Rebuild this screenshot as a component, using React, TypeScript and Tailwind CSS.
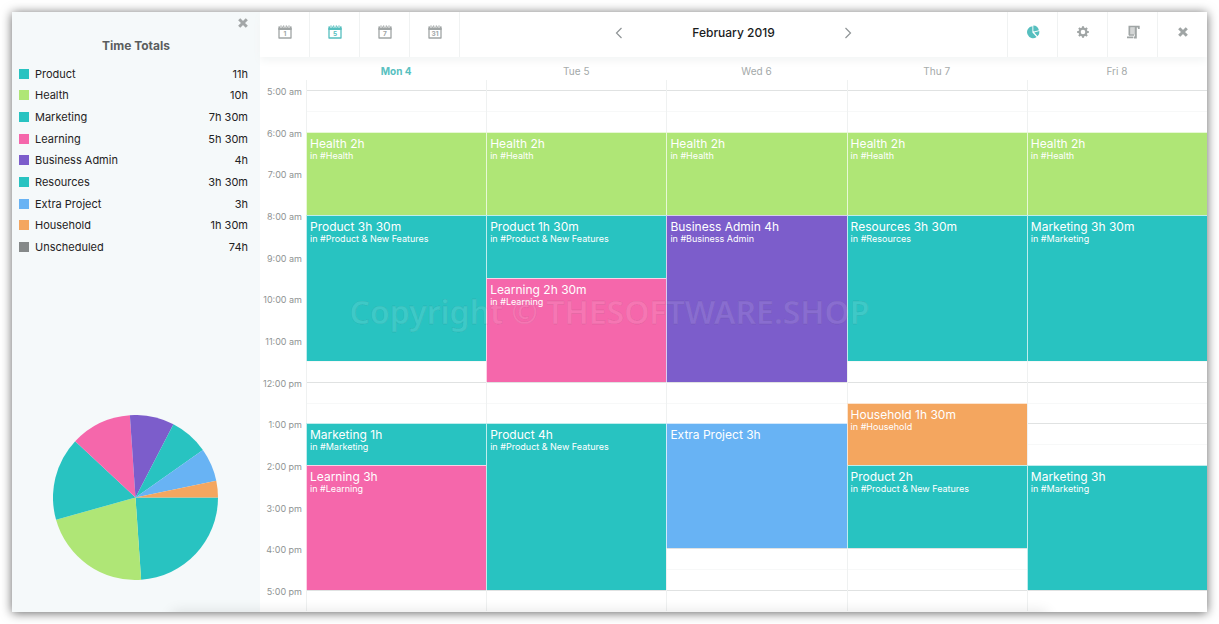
import type { CSSProperties, ReactNode } from "react";

const TEAL = "#28c3c1";
const GREEN = "#afe676";
const PINK = "#f567ab";
const PURPLE = "#7c5dcb";
const BLUE = "#68b3f4";
const ORANGE = "#f4a65f";

const totals = [
  { name: "Product", time: "11h", hours: 11, color: TEAL },
  { name: "Health", time: "10h", hours: 10, color: GREEN },
  { name: "Marketing", time: "7h 30m", hours: 7.5, color: TEAL },
  { name: "Learning", time: "5h 30m", hours: 5.5, color: PINK },
  { name: "Business Admin", time: "4h", hours: 4, color: PURPLE },
  { name: "Resources", time: "3h 30m", hours: 3.5, color: TEAL },
  { name: "Extra Project", time: "3h", hours: 3, color: BLUE },
  { name: "Household", time: "1h 30m", hours: 1.5, color: ORANGE },
  // unscheduled time is listed but not charted
  { name: "Unscheduled", time: "74h", hours: 0, color: "#858989" },
];

const days = ["Mon 4", "Tue 5", "Wed 6", "Thu 7", "Fri 8"];

const hours = [
  "5:00 am", "6:00 am", "7:00 am", "8:00 am", "9:00 am", "10:00 am", "11:00 am",
  "12:00 pm", "1:00 pm", "2:00 pm", "3:00 pm", "4:00 pm", "5:00 pm",
];

type Block = { day: number; start: number; length: number; title: string; tag?: string; color: string };

const blocks: Block[] = [
  { day: 0, start: 6, length: 2, title: "Health 2h", tag: "#Health", color: GREEN },
  { day: 0, start: 8, length: 3.5, title: "Product 3h 30m", tag: "#Product & New Features", color: TEAL },
  { day: 0, start: 13, length: 1, title: "Marketing 1h", tag: "#Marketing", color: TEAL },
  { day: 0, start: 14, length: 3, title: "Learning 3h", tag: "#Learning", color: PINK },
  { day: 1, start: 6, length: 2, title: "Health 2h", tag: "#Health", color: GREEN },
  { day: 1, start: 8, length: 1.5, title: "Product 1h 30m", tag: "#Product & New Features", color: TEAL },
  { day: 1, start: 9.5, length: 2.5, title: "Learning 2h 30m", tag: "#Learning", color: PINK },
  { day: 1, start: 13, length: 4, title: "Product 4h", tag: "#Product & New Features", color: TEAL },
  { day: 2, start: 6, length: 2, title: "Health 2h", tag: "#Health", color: GREEN },
  { day: 2, start: 8, length: 4, title: "Business Admin 4h", tag: "#Business Admin", color: PURPLE },
  { day: 2, start: 13, length: 3, title: "Extra Project 3h", color: BLUE },
  { day: 3, start: 6, length: 2, title: "Health 2h", tag: "#Health", color: GREEN },
  { day: 3, start: 8, length: 3.5, title: "Resources 3h 30m", tag: "#Resources", color: TEAL },
  { day: 3, start: 12.5, length: 1.5, title: "Household 1h 30m", tag: "#Household", color: ORANGE },
  { day: 3, start: 14, length: 2, title: "Product 2h", tag: "#Product & New Features", color: TEAL },
  { day: 4, start: 6, length: 2, title: "Health 2h", tag: "#Health", color: GREEN },
  { day: 4, start: 8, length: 3.5, title: "Marketing 3h 30m", tag: "#Marketing", color: TEAL },
  { day: 4, start: 14, length: 3, title: "Marketing 3h", tag: "#Marketing", color: TEAL },
];

// row 1 is the strip above 5:00 am, every row after it is half an hour
const rowFor = (hour: number) => (hour - 5) * 2 + 2;

function CrossIcon() {
  return (
    <svg width="10" height="10" viewBox="0 0 10 10" stroke="currentColor" strokeWidth="3">
      <path d="M1.2 1.2 8.8 8.8M8.8 1.2 1.2 8.8" />
    </svg>
  );
}

function PieIcon() {
  return (
    <svg width="14" height="14" viewBox="0 0 14 14" fill="currentColor">
      <path d="M6.4 1.2V7.6L10.6 12A6 6 0 1 1 6.4 1.2Z" />
      <path d="M7.3 0.6A6 6 0 0 1 12.9 5.2L8 6.6 7.3 6Z" />
      <path d="M8.2 7.5 13.4 6.1A6 6 0 0 1 11.6 11.2Z" />
    </svg>
  );
}

function GearIcon() {
  return (
    <svg width="12" height="12" viewBox="0 0 12 12" fill="none" stroke="currentColor">
      <circle cx="6" cy="6" r="3.4" strokeWidth="2.2" />
      <path
        d="M6 0.2V2.4M6 9.6V11.8M0.2 6H2.4M9.6 6H11.8M1.9 1.9 3.5 3.5M8.5 8.5 10.1 10.1M10.1 1.9 8.5 3.5M3.5 8.5 1.9 10.1"
        strokeWidth="2.1"
      />
    </svg>
  );
}

function ScrollIcon() {
  return (
    <svg width="14" height="14" viewBox="0 0 14 14" fill="none" stroke="currentColor">
      <path d="M4.2 2.8H9V9.6H4.2Z" fill="currentColor" fillOpacity="0.45" stroke="none" />
      <path d="M3.4 10.2V1.6H12.8V4" strokeWidth="1.8" />
      <path d="M9.8 1.6V12.4H8" strokeWidth="2" />
      <path d="M1 12.4H7.4M3 10H8" strokeWidth="1.7" />
    </svg>
  );
}

function CalendarIcon({ label }: { label: string }) {
  return (
    <svg width="14" height="14" viewBox="0 0 14 14">
      <path d="M1 3V13H13V3" fill="none" stroke="currentColor" strokeWidth="1.3" strokeLinejoin="round" />
      <path d="M0.4 1.4H13.6V5H0.4Z" fill="currentColor" />
      <path d="M3 0V2.4M5.7 0V2.4M8.3 0V2.4M11 0V2.4" stroke="white" strokeWidth="2" />
      <path d="M3 0.4V2.2M5.7 0.4V2.2M8.3 0.4V2.2M11 0.4V2.2" stroke="currentColor" strokeWidth="1" />
      <text x="7" y="11.3" textAnchor="middle" fontSize="6.5" fontWeight="700" fill="currentColor">
        {label}
      </text>
    </svg>
  );
}

function Chevron({ d }: { d: string }) {
  return (
    <svg width="12" height="12" viewBox="0 0 12 12" fill="none" stroke="currentColor" strokeWidth="1.2">
      <path d={d} />
    </svg>
  );
}

function ToolButton({ label, active, side, children }: {
  label: string;
  active?: boolean;
  side: "left" | "right";
  children: ReactNode;
}) {
  return (
    <button
      aria-label={label}
      className={`grid w-[50px] place-items-center border-[#f0f2f2] pb-1.5 ${side === "left" ? "border-r" : "border-l"} ${
        active ? "text-[#56bfbf]" : "text-[#a0a5a5]"
      }`}
    >
      {children}
    </button>
  );
}

function PieChart() {
  const sum = totals.reduce((acc, t) => acc + t.hours, 0);
  let angle = 0;
  return (
    <svg viewBox="-100 -100 200 200" className="w-[165px]" role="img" aria-label="Time totals chart">
      {totals.filter((t) => t.hours > 0).map((t) => {
        const from = angle;
        angle += (t.hours / sum) * Math.PI * 2;
        const d = `M0 0L${100 * Math.cos(from)} ${100 * Math.sin(from)}A100 100 0 0 1 ${100 * Math.cos(angle)} ${100 * Math.sin(angle)}Z`;
        return <path key={t.name} d={d} fill={t.color} />;
      })}
    </svg>
  );
}

function Sidebar() {
  return (
    <aside className="flex w-[248px] shrink-0 flex-col bg-[#f5f9fa]">
      <button aria-label="Close totals" className="mt-1.5 mr-3 self-end text-[#a3a7a8]">
        <CrossIcon />
      </button>
      <h2 className="mt-2.5 text-center text-[12px] leading-4 font-bold text-[#5a5d5e]">Time Totals</h2>
      <ul className="mt-[9px] grid min-h-[195px] pr-3 pl-[7px] text-[11px] leading-4 text-[#1f2223]">
        {totals.map((t) => (
          <li key={t.name} className="flex items-center">
            <span className="mr-1.5 size-[10px]" style={{ backgroundColor: t.color }} />
            <span className="flex-1">{t.name}</span>
            <span>{t.time}</span>
          </li>
        ))}
      </ul>
      <div className="mt-auto flex justify-center pt-6 pr-0.5 pb-8">
        <PieChart />
      </div>
    </aside>
  );
}

function Toolbar() {
  return (
    <header className="z-10 flex h-[45px] shrink-0 bg-white shadow-[0_4px_8px_#f3f5f5]">
      <div className="flex">
        <ToolButton side="left" label="Day"><CalendarIcon label="1" /></ToolButton>
        <ToolButton side="left" label="Work week" active><CalendarIcon label="5" /></ToolButton>
        <ToolButton side="left" label="Week"><CalendarIcon label="7" /></ToolButton>
        <ToolButton side="left" label="Month"><CalendarIcon label="31" /></ToolButton>
      </div>
      <div className="flex flex-1 items-center justify-center pb-1 text-[#8f9496]">
        <button aria-label="Previous month"><Chevron d="M8.5 1 3.5 6l5 5" /></button>
        <h1 className="w-[217px] text-center text-[12px] leading-4 font-medium text-[#1a1c1d]">February 2019</h1>
        <button aria-label="Next month"><Chevron d="M3.5 1 8.5 6l-5 5" /></button>
      </div>
      <div className="flex">
        <ToolButton side="right" label="Totals" active><PieIcon /></ToolButton>
        <ToolButton side="right" label="Settings"><GearIcon /></ToolButton>
        <ToolButton side="right" label="Notes"><ScrollIcon /></ToolButton>
        <ToolButton side="right" label="Close"><CrossIcon /></ToolButton>
      </div>
    </header>
  );
}

function Calendar() {
  return (
    <section className="flex flex-1 flex-col">
      <div className="mt-[5px] grid grid-cols-[46px_repeat(5,minmax(0,1fr))] text-center text-[10px] leading-[18px] text-[#a3a8a8]">
        <span />
        {days.map((day, i) => (
          <span key={day} className={i === 0 ? "font-bold text-[#56bfbf]" : ""}>{day}</span>
        ))}
      </div>
      <div className="grid flex-1 grid-cols-[46px_repeat(5,minmax(0,1fr))] grid-rows-[10px_repeat(25,minmax(20px,1fr))] pb-px">
        {hours.map((hour, i) => (
          <span
            key={hour}
            className="col-start-1 h-4 -translate-y-1/2 pr-1 text-right text-[9px] leading-5 text-[#8f9494]"
            style={{ gridRowStart: rowFor(i + 5) }}
          >
            {hour}
          </span>
        ))}
        {Array.from({ length: 25 }, (_, i) => (
          <div
            key={i}
            className={`col-span-5 col-start-2 border-t ${i % 2 ? "border-[#f7f8f8]" : "border-[#e0e2e2]"}`}
            style={{ gridRowStart: i + 2 }}
          />
        ))}
        {days.map((day, i) => (
          <div key={day} className="row-span-full border-l border-[#eff1f1]" style={{ gridColumnStart: i + 2 }} />
        ))}
        {blocks.map((b) => {
          const place: CSSProperties = {
            gridColumnStart: b.day + 2,
            gridRow: `${rowFor(b.start)} / ${rowFor(b.start + b.length)}`,
            backgroundColor: b.color,
          };
          return (
            <article
              key={`${b.day}-${b.start}`}
              className="overflow-hidden border-t border-l border-white/70 px-[3px] pt-1 text-white"
              style={place}
            >
              <h3 className="text-[12px] leading-[14px]">{b.title}</h3>
              {b.tag && <p className="text-[9px] leading-[10px]">in {b.tag}</p>}
            </article>
          );
        })}
      </div>
    </section>
  );
}

export default function App() {
  return (
    <div className="flex min-h-screen bg-white p-3 font-[Inter,sans-serif]">
      <main className="relative flex flex-1 overflow-hidden bg-white shadow-[0_1px_10px_rgba(0,0,0,0.6)]">
        <Sidebar />
        <div className="flex min-w-0 flex-1 flex-col">
          <Toolbar />
          <Calendar />
        </div>
        <div className="pointer-events-none absolute inset-x-40 -bottom-3 h-3 shadow-[0_0_14px_rgba(0,0,0,0.12)]" />
        <p className="pointer-events-none absolute inset-0 flex items-center justify-center font-['Noto_Sans',sans-serif] text-[32px] font-semibold text-white/10 [-webkit-text-stroke:1px_rgba(0,0,0,0.06)]">
          Copyright © THESOFTWARE.SHOP
        </p>
      </main>
    </div>
  );
}
